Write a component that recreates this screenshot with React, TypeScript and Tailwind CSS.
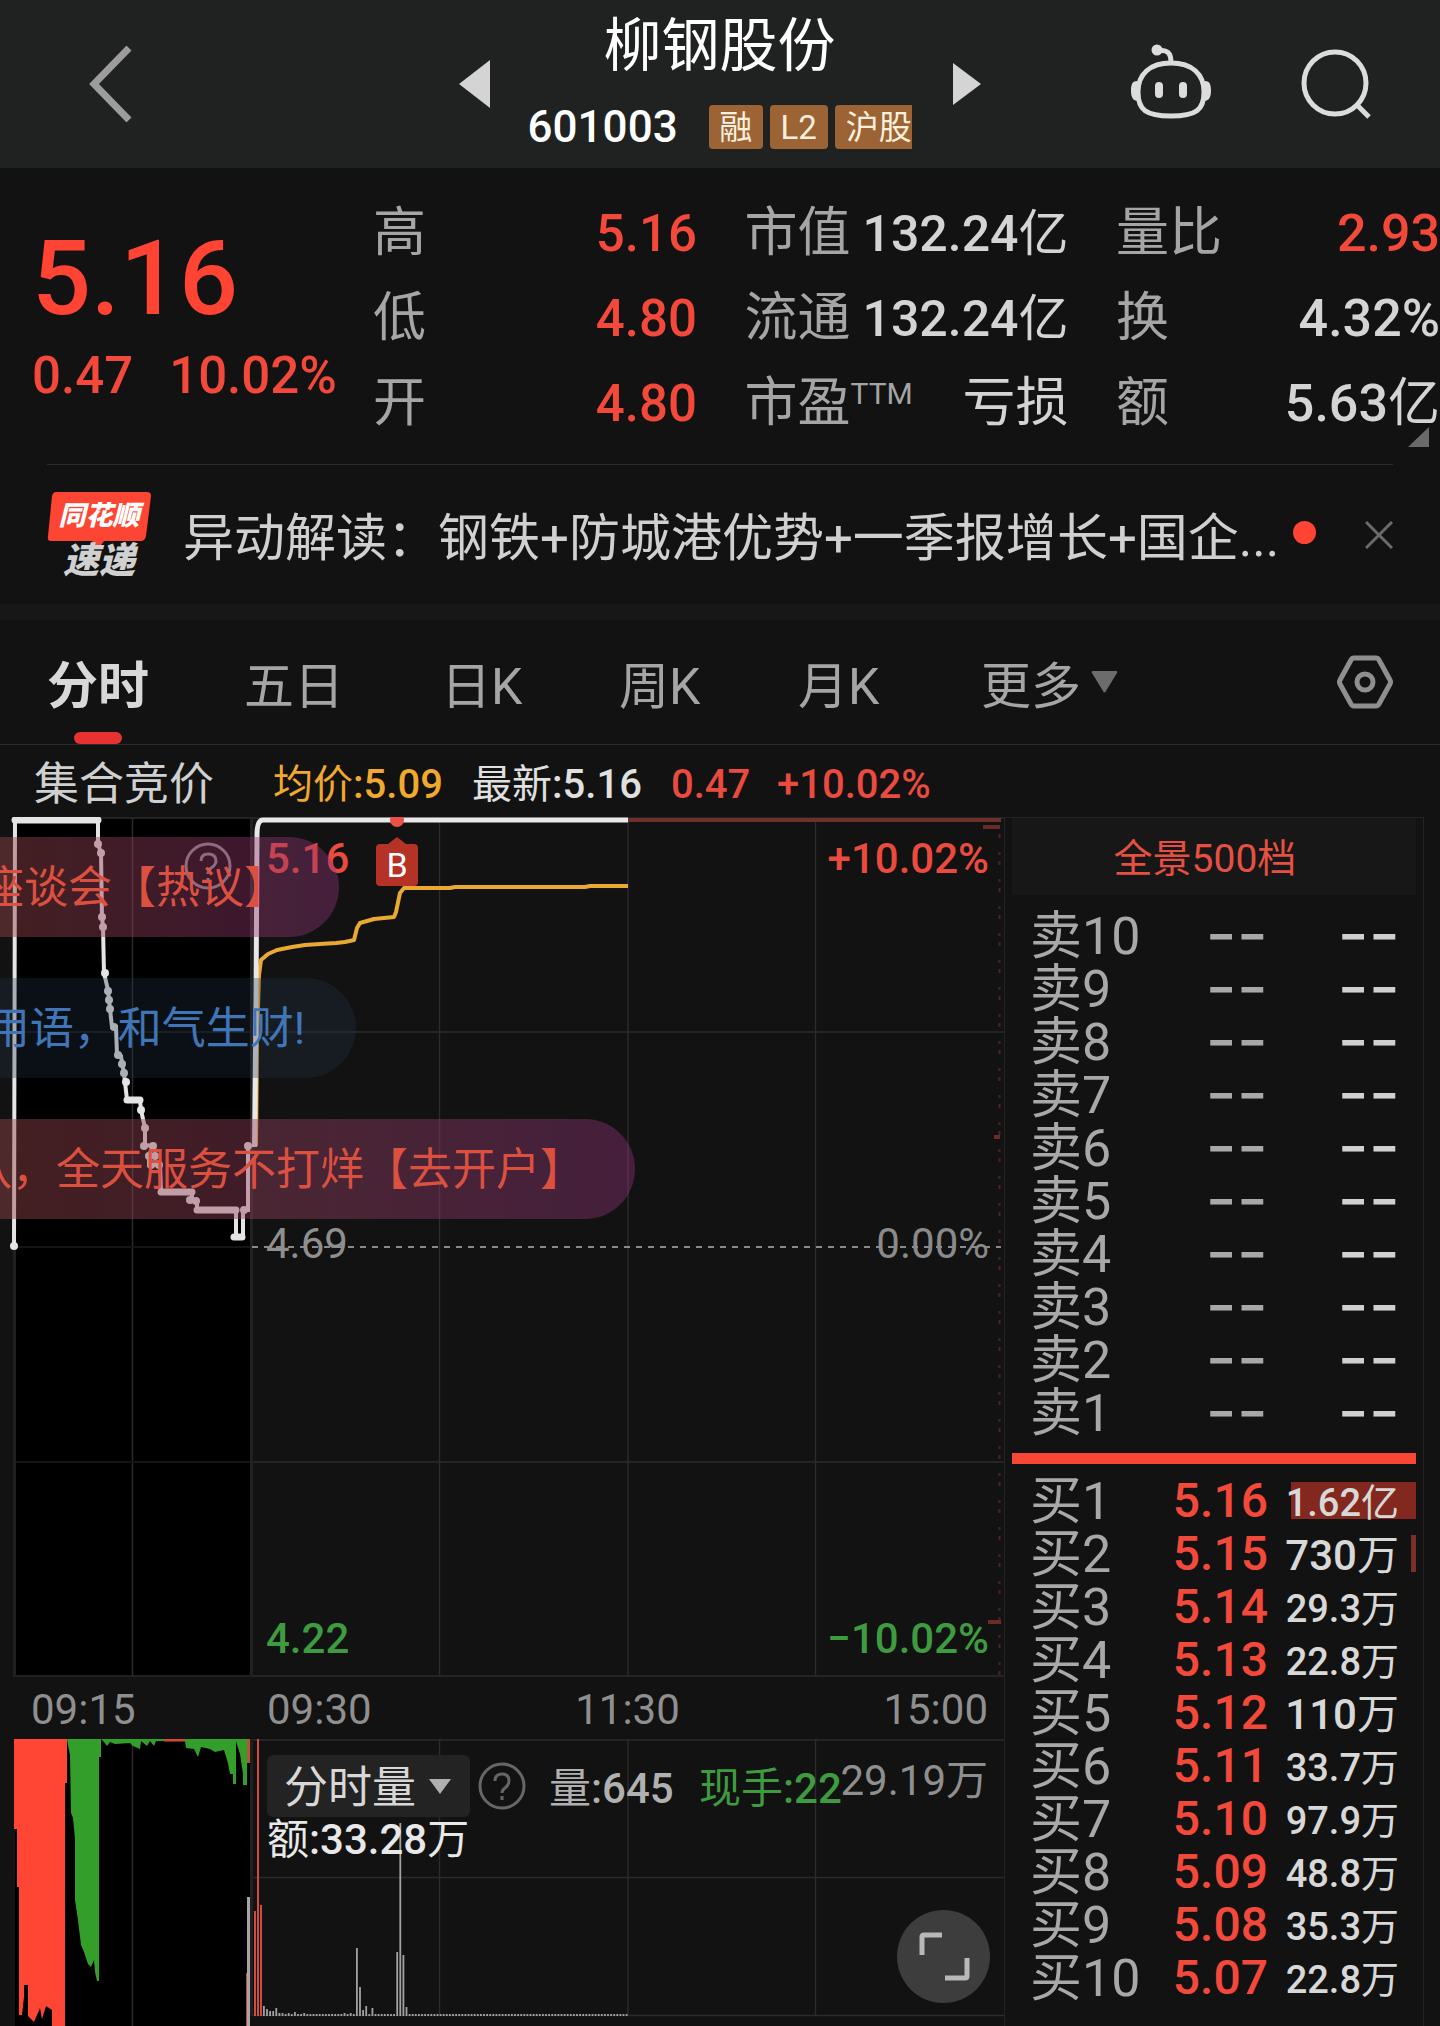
import React from "react";

const quoteColumns = [
  {
    size: "text-[51px]",
    rows: [
      { label: "高", value: "5.16", tone: "text-[#f2493b]" },
      { label: "低", value: "4.80", tone: "text-[#f2493b]" },
      { label: "开", value: "4.80", tone: "text-[#f2493b]" },
    ],
  },
  {
    size: "text-[50px]",
    rows: [
      { label: "市值", value: "132.24亿", tone: "text-[#d4d4d4]" },
      { label: "流通", value: "132.24亿", tone: "text-[#d4d4d4]" },
      { label: "市盈", sup: "TTM", value: "亏损", tone: "text-[#d4d4d4]" },
    ],
  },
  {
    size: "text-[52px]",
    rows: [
      { label: "量比", value: "2.93", tone: "text-[#f2493b]" },
      { label: "换", value: "4.32%", tone: "text-[#d4d4d4]" },
      { label: "额", value: "5.63亿", tone: "text-[#d4d4d4]" },
    ],
  },
];

const sells = ["卖10", "卖9", "卖8", "卖7", "卖6", "卖5", "卖4", "卖3", "卖2", "卖1"];

const buys = [
  { label: "买1", price: "5.16", qty: "1.62亿", bar: "w-[125px] bg-[#82281f]" },
  { label: "买2", price: "5.15", qty: "730万", bar: "w-[5px] bg-[#7a3029]" },
  { label: "买3", price: "5.14", qty: "29.3万" },
  { label: "买4", price: "5.13", qty: "22.8万" },
  { label: "买5", price: "5.12", qty: "110万" },
  { label: "买6", price: "5.11", qty: "33.7万" },
  { label: "买7", price: "5.10", qty: "97.9万" },
  { label: "买8", price: "5.09", qty: "48.8万" },
  { label: "买9", price: "5.08", qty: "35.3万" },
  { label: "买10", price: "5.07", qty: "22.8万" },
];

const auctionLine =
  "14,1246 15,820 98,820 98,844 101,853 102,917 103,927 104,973 108,990 109,1000 110,1009 112,1027 116,1027 117,1055 121,1056 122,1063 124,1073 125,1082 127,1100 140,1100 141,1110 145,1128 145,1145 153,1146 149,1155 149,1165 160,1165 161,1192 192,1192 192,1200 197,1201 197,1210 236,1210 236,1237 243,1237 243,1210 248,1210 248,1145";

const auctionDots = [
  [14, 1246], [98, 844], [101, 853], [102, 917], [103, 927], [105, 973], [108, 991], [109, 1000],
  [110, 1009], [114, 1027], [118, 1055], [122, 1064], [124, 1073], [126, 1082], [141, 1110],
  [145, 1128], [144, 1146], [153, 1146], [149, 1156], [155, 1156], [151, 1165], [159, 1165],
  [190, 1200], [196, 1201], [244, 1210], [248, 1146],
];

const averageLine =
  "256,1146 257,1040 259,975 261,960 268,954 277,950 292,947 305,945 320,944 336,943 345,942 354,940 357,928 360,923 374,919 394,917 396,912 400,893 404,888 450,888 455,887 585,887 590,886 628,886";

const volumeBars = Array.from({ length: 118 }, (_, i) => {
  const spikes: Record<number, number> = {
    0: 10, 1: 7, 2: 5, 3: 5, 4: 8, 5: 3, 6: 3, 8: 3, 10: 4, 13: 3, 26: 3, 28: 3,
    30: 68, 31: 29, 32: 6, 33: 10, 35: 8, 43: 64, 44: 193, 45: 61, 46: 9,
  };
  return { x: 264 + i * 3.1, h: spikes[i] ?? 2 };
});

function TopBar() {
  return (
    <header className="flex h-[168px] items-center bg-[#202221]">
      <div className="flex w-[34%] items-center justify-between pl-[88px]">
        <button aria-label="返回">
          <svg className="block h-[76px] w-[46px]" viewBox="0 0 46 76" fill="none" stroke="#9c9c9c" strokeWidth="7">
            <path d="M41 2 6 38 41 74" />
          </svg>
        </button>
        <button aria-label="上一只">
          <svg className="block h-[48px] w-[31px]" viewBox="0 0 31 48" fill="#d4d4d4">
            <path d="M0 24 31 0V48Z" />
          </svg>
        </button>
      </div>
      <div className="ml-[38px] flex w-[384px] flex-col items-center pt-[6px]">
        <h1 className="text-[58px] leading-[80px] text-white">柳钢股份</h1>
        <div className="flex h-[82px] w-full items-center overflow-hidden">
          <span className="mr-[31px] text-[44px] font-medium leading-none text-white">601003</span>
          <span className="mr-[7px] flex h-[44px] w-[54px] shrink-0 items-center justify-center rounded bg-[#9c6434] text-[33px] leading-none text-[#fbf0dd]">融</span>
          <span className="mr-[7px] flex h-[44px] w-[58px] shrink-0 items-center justify-center rounded bg-[#9c6434] text-[33px] leading-none text-[#fbf0dd]">L2</span>
          <span className="flex h-[44px] flex-1 items-center whitespace-nowrap rounded-l bg-[#9c6434] pl-[11px] text-[33px] leading-none text-[#fbf0dd]">沪股</span>
        </div>
      </div>
      <div className="flex flex-1 items-center">
        <button aria-label="下一只" className="ml-[41px]">
          <svg className="block h-[42px] w-[28px]" viewBox="0 0 28 42" fill="#d4d4d4">
            <path d="M28 21 0 0V42Z" />
          </svg>
        </button>
        <button aria-label="智能助手" className="mb-[4px] ml-auto">
          <svg className="block h-[76px] w-[82px]" viewBox="0 0 82 76" fill="none" stroke="#dcdcdc">
            <path d="M28 7C37 5 41 9 41 18" strokeWidth="5" />
            <circle cx="27" cy="6" r="5.500" fill="#dcdcdc" stroke="none" />
            <path d="M41 19C62 19 74 30 74 48C74 66 66 72 41 72C16 72 8 66 8 48C8 30 20 19 41 19Z" strokeWidth="5" />
            <path d="M7 37C2 37 1 41 1 47C1 53 3 57 8 57ZM75 37C80 37 81 41 81 47C81 53 79 57 74 57Z" fill="#dcdcdc" stroke="none" />
            <path d="M29 42V50M53 42V50" strokeWidth="8" strokeLinecap="round" />
          </svg>
        </button>
        <button aria-label="搜索" className="ml-[88px] mr-[68px]">
          <svg className="block h-[72px] w-[72px]" viewBox="0 0 72 72" fill="none" stroke="#dcdcdc" strokeWidth="5">
            <circle cx="35" cy="35" r="31" />
            <path d="M57 57 69 69" />
          </svg>
        </button>
      </div>
    </header>
  );
}

function Quote() {
  return (
    <section className="relative flex h-[296px] pt-[23px]">
      <div className="w-[373px] pl-[32px] text-[#ff4433]">
        <div className="mt-[28px] text-[104px] font-medium leading-[120px]">5.16</div>
        <div className="flex gap-[36px] pt-[7px] text-[51px] font-medium leading-[60px] text-[#f2493b]">
          <span>0.47</span>
          <span>10.02%</span>
        </div>
      </div>
      <div className="flex flex-1 justify-between">
        {quoteColumns.map((col, c) => (
          <dl key={c} className="w-[324px]">
            {col.rows.map((row) => (
              <div key={row.label} className="flex h-[85px] items-center justify-between whitespace-nowrap leading-none">
                <dt className="flex text-[53px] text-[#a5a5a5]">
                  {row.label}
                  {"sup" in row && row.sup && <sup className="top-0 pt-[2px] text-[30px] leading-none">{row.sup}</sup>}
                </dt>
                <dd className={`${/\d/.test(row.value) ? col.size : "text-[53px]"} ${row.tone}`}>
                  <Mixed text={row.value} />
                </dd>
              </div>
            ))}
          </dl>
        ))}
      </div>
      <svg className="absolute right-[11px] bottom-[17px] h-[20px] w-[21px]" viewBox="0 0 21 20" fill="#6a6a6a">
        <path d="M21 0V20H0Z" />
      </svg>
    </section>
  );
}

/* Digits are set in medium weight, the Chinese unit after them in regular. */
function Mixed({ text }: { text: string }) {
  const parts = text.match(/[\d.:%+−]+|[^\d.:%+−]+/g) ?? [];
  return (
    <>
      {parts.map((p, i) => (
        <span key={i} className={/[\d.:%]/.test(p) ? "font-medium" : "font-normal"}>
          {p}
        </span>
      ))}
    </>
  );
}

function News() {
  return (
    <section className="mx-[47px] flex h-[140px] items-center border-t border-[#2b2b2b]">
      <div className="relative flex w-[104px] flex-col items-center pt-[4px] italic">
        <svg className="absolute inset-x-0 top-[4px] h-[58px] w-full" viewBox="0 0 104 58" fill="#fd4534">
          <path d="M9 0H100Q104 0 104 4L99 44Q98 49 94 49H57L51 57 45 49H4Q0 49 1 44L5 4Q6 0 9 0Z" />
        </svg>
        <span className="relative text-[27px] font-black leading-[49px] text-white">同花顺</span>
        <span className="relative text-[36px] font-black leading-[40px] text-[#d0d0d0]">速递</span>
      </div>
      <a href="#news" className="ml-[32px] min-w-0 truncate pt-[9px] text-[51px] leading-[72px] text-[#d0d0d0]">
        异动解读：钢铁+防城港优势+一季报增长+国企...
      </a>
      <span className="mb-[4px] ml-[14px] h-[23px] w-[23px] shrink-0 rounded-full bg-[#ff4433]" />
      <button aria-label="关闭" className="ml-auto">
        <svg className="block h-[28px] w-[28px]" viewBox="0 0 28 28" stroke="#6a6a6a" strokeWidth="3">
          <path d="M1 1 27 27M27 1 1 27" />
        </svg>
      </button>
    </section>
  );
}

function Tabs() {
  return (
    <nav className="relative flex h-[125px] items-center whitespace-nowrap border-b border-[#2b2b2b] px-[47px] pt-[10px] text-[50px] leading-[60px] text-[#a5a5a5]">
      <div className="w-[197px]">
        <button className="text-[51px] font-bold text-[#d8d8d8]">分时</button>
        <span className="absolute bottom-0 left-[74px] h-[12px] w-[48px] rounded-full bg-[#e83232]" />
      </div>
      <button className="w-[197px] text-left">五日</button>
      <button className="w-[178px] text-left">日K</button>
      <button className="w-[179px] text-left">周K</button>
      <button className="w-[183px] text-left">月K</button>
      <button className="flex items-center gap-[10px]">
        更多
        <svg className="mb-[10px] h-[22px] w-[27px]" viewBox="0 0 27 22" fill="#6c6c6c">
          <path d="M2 0H25Q27 0 26 2L15 20Q13.500 23 12 20L1 2Q0 0 2 0Z" />
        </svg>
      </button>
      <button aria-label="设置" className="mb-[10px] ml-auto">
        <svg className="block h-[54px] w-[56px]" viewBox="0 0 56 54" fill="none" stroke="#8f8f8f">
          <path d="M17 3H39Q41 3 42 5L53 25Q54 27 53 29L42 49Q41 51 39 51H17Q15 51 14 49L3 29Q2 27 3 25L14 5Q15 3 17 3Z" strokeWidth="5" />
          <circle cx="28" cy="27" r="8" strokeWidth="5" />
        </svg>
      </button>
    </nav>
  );
}

function InfoBar() {
  return (
    <div className="flex h-[72px] items-center whitespace-nowrap pl-[34px] pt-[8px] text-[40px] leading-[60px]">
      <span className="w-[239px] text-[45px] text-[#d0d0d0]">集合竞价</span>
      <span className="w-[199px] text-[#f0a92c]"><Mixed text="均价:5.09" /></span>
      <span className="w-[199px] text-[#e0e0e0]"><Mixed text="最新:5.16" /></span>
      <span className="w-[106px] font-medium text-[#e94b3e]">0.47</span>
      <span className="font-medium text-[#e94b3e]">+10.02%</span>
    </div>
  );
}

function PriceChart() {
  return (
    <div className="relative overflow-hidden text-[42px] font-medium leading-[50px]">
      <svg className="block h-auto w-full" viewBox="0 817 1004 860" fill="none">
        <rect x="15" y="818" width="235" height="859" fill="#000" />
        <g stroke="#2b2b2b" strokeWidth="1.500">
          <path d="M14 818H1004M252 1032H1004M252 1462H1004M14 1676H1004" />
          <path d="M132.500 818V1676M439.500 818V1676M628 818V1676M815.500 818V1676" />
        </g>
        <path d="M15 1032H250M15 1247H250M15 1462H250" stroke="#151515" strokeWidth="2" />
        <path d="M251.500 818V1677M14.500 818V1677" stroke="#202020" strokeWidth="3" />
        <path d="M252 1247H1001" stroke="#8a8a8a" strokeWidth="2" strokeDasharray="6 6" />
        <path d="M999.500 834V1675" stroke="#4b2422" strokeWidth="2" strokeDasharray="4 14 3 6" />
        <path d="M983 827H1000M994 1137H1000M988 1622H1001" stroke="#6a2b27" strokeWidth="4" />
        <path d="M628 820H1001" stroke="#6d302b" strokeWidth="4" />
        <g stroke="#8d8d8d" strokeWidth="3">
          <circle cx="208" cy="866" r="22" />
          <path d="M201 861Q201 854 208 854Q216 854 216 861Q216 865 211 868Q208 870 208 874M208 878V881" />
        </g>
        <polyline points={averageLine} stroke="#eaa933" strokeWidth="4" strokeLinejoin="round" />
        <polyline points={auctionLine} stroke="#e4e4e4" strokeWidth="4" />
        <path d="M15 820H98M127 1100H140M161 1192H192M197 1210H236M234 1237H242" stroke="#e4e4e4" strokeWidth="7" strokeLinecap="round" />
        {auctionDots.map(([x, y]) => (
          <circle key={`${x}-${y}`} cx={x} cy={y} r="4" fill="#e4e4e4" />
        ))}
        <path d="M254.500 1147 256 1000 257 835Q257 820 263 820H628" stroke="#e8e8e8" strokeWidth="5" />
        <circle cx="397" cy="820" r="7" fill="#ea5145" />
        <path d="M397 837 406 844H414Q418 844 418 848V882Q418 886 414 886H380Q376 886 376 882V848Q376 844 380 844H388Z" fill="#b53227" />
      </svg>
      <span className="absolute left-[376px] top-[27px] w-[42px] text-center text-[34px] font-normal leading-[43px] text-white">B</span>
      <span className="absolute left-[266px] top-[17px] text-[#e94b3e]">5.16</span>
      <span className="absolute right-[15px] top-[17px] text-[#e94b3e]">+10.02%</span>
      <span className="absolute left-[266px] top-[402px] font-normal text-[#8f8f8f]">4.69</span>
      <span className="absolute right-[15px] top-[402px] font-normal text-[#8a8a8a]">0.00%</span>
      <span className="absolute bottom-[13px] left-[266px] text-[#3f9b3f]">4.22</span>
      <span className="absolute bottom-[13px] right-[15px] text-[#3f9b3f]">−10.02%</span>

      <Bubble box="top-[20px] w-[339px] bg-linear-to-r from-[#96464b]/45 to-[#91327a]/40 text-[#dc5040]">专家座谈会【热议】</Bubble>
      <Bubble box="top-[161px] w-[356px] bg-[#203448]/30 text-[#4076b8]">文明用语，和气生财!</Bubble>
      <Bubble box="top-[302px] w-[635px] bg-linear-to-r from-[#96464b]/45 to-[#91327a]/40 text-[#dc5040]">团队，全天服务不打烊【去开户】</Bubble>
    </div>
  );
}

function Bubble({ box, children }: { box: string; children: React.ReactNode }) {
  return (
    <div className={`absolute left-0 flex h-[100px] items-center justify-end overflow-hidden whitespace-nowrap rounded-r-full pr-[51px] pt-[2px] text-[44px] font-normal ${box}`}>
      <span>{children}</span>
    </div>
  );
}

function VolumeChart() {
  return (
    <div className="relative overflow-hidden text-[42px] leading-[50px]">
      <svg className="block h-auto w-full" viewBox="0 1739 1004 287" fill="none">
        <rect x="15" y="1739" width="235" height="287" fill="#000" />
        <g stroke="#2b2b2b" strokeWidth="1.500">
          <path d="M252 1740H1004M252 1877.500H1004M252 2015.500H1004" />
          <path d="M132.500 1739V2026M439.500 1739V2016M628 1739V2016M815.500 1739V2016" />
        </g>
        <path d="M251.500 1739V2016" stroke="#202020" strokeWidth="3" />
        <path
          fill="#ff4534"
          d="M14 1739V1829H17V1887H19V2015H22L24 1997V1985H28V2016L34 2022 40 2008 42 2019 46 2006 52 2010V2026H65V1783H67V1739Z"
        />
        <path
          fill="#349e2b"
          d="M67 1739 68 1745 70 1755 71 1813 73 1818 75 1839V1900L78 1920 81 1945 84 1952 88 1964 91 1967 94 1960 95 1972 97 1981H99V1757H101V1739ZM101 1739 104 1742 107 1746 110 1742 115 1744 130 1743 133 1746 140 1749 141 1741 147 1746 150 1741 154 1746 156 1741H185L186 1748 194 1749 198 1757 201 1747 210 1749 215 1752 224 1750 228 1763 230 1774H233V1784H236V1741L240 1754 243 1774V1785H247V1739Z"
        />
        <path d="M164 1740H185" stroke="#d14b37" strokeWidth="3" />
        <path d="M248.500 1739V1763" stroke="#b5553a" strokeWidth="3" />
        <path d="M247 1973V2026" stroke="#c34a3c" strokeWidth="2" />
        <path d="M248.500 1897V2026" stroke="#a6a6a6" strokeWidth="3" />
        <path d="M255 1911V2016M258 1739V2016M261 1905V2016" stroke="#d04c3e" strokeWidth="2" />
        {volumeBars.map((b) => (
          <rect key={b.x} x={b.x - 1} y={2016 - b.h} width="1.800" height={b.h} fill="#a2a2a2" />
        ))}
      </svg>
      <label className="absolute left-[267px] top-[16px] block h-[62px] w-[203px] rounded-md bg-[#232323]">
        <select aria-label="副图指标" className="h-full w-full appearance-none bg-transparent pl-[17px] pt-[4px] text-[44px] leading-[56px] text-[#d8d8d8]">
          <option>分时量</option>
        </select>
        <svg className="pointer-events-none absolute right-[19px] top-[24px] h-[15px] w-[22px]" viewBox="0 0 22 15" fill="#b0b0b0">
          <path d="M0 0H22L11 15Z" />
        </svg>
      </label>
      <button aria-label="说明" className="absolute left-[478px] top-[23px]">
        <svg className="block h-[48px] w-[48px]" viewBox="0 0 48 48" fill="none" stroke="#666" strokeWidth="3">
          <circle cx="24" cy="24" r="22" />
          <path d="M17 19Q17 12 24 12Q31 12 31 19Q31 23 27 26Q24 28 24 31M24 34V38" />
        </svg>
      </button>
      <span className="absolute left-[549px] top-[25px] text-[#b0b0b0]"><Mixed text="量:645" /></span>
      <span className="absolute left-[699px] top-[25px] text-[#3f9b3f]"><Mixed text="现手:22" /></span>
      <span className="absolute right-[16px] top-[17px] text-[#8f8f8f]">29.19万</span>
      <span className="absolute left-[267px] top-[76px] text-[#e8e8e8]"><Mixed text="额:33.28万" /></span>
      <button aria-label="全屏" className="absolute bottom-[23px] right-[14px] h-[93px] w-[93px] rounded-full bg-[#3d3d3d]">
        <svg className="block h-full w-full" viewBox="0 0 93 93" fill="none" stroke="#b8b8b8" strokeWidth="5">
          <path d="M25 45V27Q25 25 27 25H45M48 68H68Q70 68 70 66V48" />
        </svg>
      </button>
    </div>
  );
}

function OrderBook() {
  return (
    <aside className="mr-[16px] w-[420px] shrink-0 border-x border-t border-[#232323] px-[7px]">
      <button className="block h-[77px] w-full bg-[#171717] pr-[18px] pt-[6px] text-[39px] leading-none text-[#e55042]">全景500档</button>
      <table className="mt-[14px] w-full table-fixed whitespace-nowrap">
        <tbody>
          {sells.map((s) => (
            <tr key={s} className="h-[53px] leading-[53px]">
              <th className="w-[130px] p-0 pl-[18px] pt-[2px] text-left text-[52px] font-normal leading-[51px] text-[#a8a8a8]">{s}</th>
              <td className="w-[126px] p-0 pb-[5px] text-right font-[Inter] text-[68px] leading-[48px] text-[#a8a8a8]">--</td>
              <td className="p-0 pb-[5px] pr-[16px] text-right font-[Inter] text-[68px] leading-[48px] text-[#d0d0d0]">--</td>
            </tr>
          ))}
        </tbody>
      </table>
      <div className="mt-[14px] h-[11px] bg-[#fa4635]" />
      <table className="mt-[10px] w-full table-fixed whitespace-nowrap">
        <tbody>
          {buys.map((b) => (
            <tr key={b.label} className="h-[53px] leading-[53px]">
              <th className="w-[130px] p-0 pl-[18px] pt-[2px] text-left text-[52px] font-normal leading-[51px] text-[#a8a8a8]">{b.label}</th>
              <td className="w-[126px] p-0 text-right text-[48px] font-medium text-[#f2493b]">{b.price}</td>
              <td
                className={
                  b.qty.includes(".")
                    ? "relative p-0 pr-[17px] pt-[5px] text-right text-[38px] leading-[48px] text-[#d8d8d8]"
                    : "relative p-0 pr-[17px] pt-[5px] text-right text-[42px] leading-[48px] text-[#d8d8d8]"
                }
              >
                {b.bar && <span className={`absolute right-0 top-[8px] h-[37px] ${b.bar}`} />}
                <span className="relative"><Mixed text={b.qty} /></span>
              </td>
            </tr>
          ))}
        </tbody>
      </table>
    </aside>
  );
}

export default function App() {
  return (
    <main className="min-h-screen overflow-hidden bg-[#121212] font-[Roboto,'Noto_Sans_CJK_SC',sans-serif]">
      <TopBar />
      <Quote />
      <News />
      <div className="h-[16px] bg-[#171717]" />
      <Tabs />
      <InfoBar />
      <div className="flex">
        <div className="min-w-0 flex-1">
          <PriceChart />
          <div className="flex h-[62px] items-center pt-[4px] text-[42px] leading-none text-[#8f8f8f]">
            <span className="w-[250px] pl-[31px]">09:15</span>
            <div className="flex flex-1 justify-between pl-[17px] pr-[16px]">
              <span>09:30</span>
              <span>11:30</span>
              <span>15:00</span>
            </div>
          </div>
          <VolumeChart />
        </div>
        <OrderBook />
      </div>
    </main>
  );
}
